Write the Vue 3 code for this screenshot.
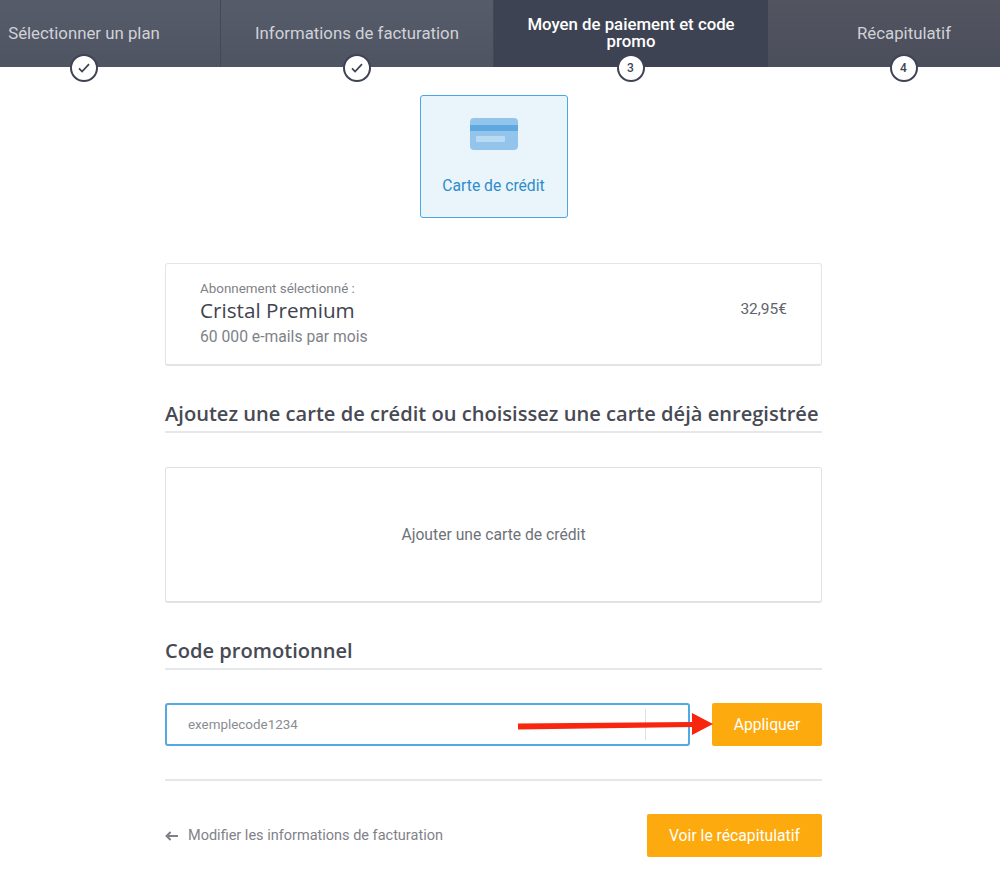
<script setup>
const steps = [
  { label: 'Sélectionner un plan', done: true },
  { label: 'Informations de facturation', done: true },
  { label: 'Moyen de paiement et code promo', num: 3, active: true },
  { label: 'Récapitulatif', num: 4, last: true },
]
</script>

<template>
  <div class="page">
    <header class="stepper">
      <div class="track">
        <div
          v-for="s in steps"
          :key="s.label"
          class="step"
          :class="{ active: s.active, last: s.last }"
        >
          <span class="step-label">{{ s.label }}</span>
          <span class="badge">
            <svg v-if="s.done" width="12" height="10" viewBox="0 0 12 10">
              <path d="M1 5.4 L4.1 8.6 L11 1.2" fill="none" stroke="#3d4252" stroke-width="1.7" />
            </svg>
            <template v-else>{{ s.num }}</template>
          </span>
        </div>
      </div>
    </header>

    <main class="content">
      <div class="method-wrap">
        <div class="method">
          <svg class="card-icon" width="48" height="32" viewBox="0 0 48 32">
            <rect width="48" height="32" rx="4" fill="#93c5ec" />
            <rect y="7" width="48" height="6" fill="#5eaae0" />
            <rect x="6" y="18" width="29" height="6" rx="1" fill="#b9daf3" />
          </svg>
          <span class="method-label">Carte de crédit</span>
        </div>
      </div>

      <section class="summary">
        <div>
          <div class="sum-small">Abonnement sélectionné :</div>
          <div class="sum-name">Cristal Premium</div>
          <div class="sum-detail">60 000 e-mails par mois</div>
        </div>
        <div class="price">32,95€</div>
      </section>

      <h2 class="title first">Ajoutez une carte de crédit ou choisissez une carte déjà enregistrée</h2>

      <div class="add-card">Ajouter une carte de crédit</div>

      <h2 class="title second">Code promotionnel</h2>

      <div class="promo">
        <div class="input">
          <span class="placeholder">exemplecode1234</span>
          <span class="input-sep"></span>
        </div>
        <button class="btn apply">Appliquer</button>
        <svg class="arrow" width="200" height="30" viewBox="0 0 200 30">
          <path d="M0 10.5 L174 9 L174 0 L195 11 L174 22 L174 14 L0 16.5 Z" fill="#f8250f" />
        </svg>
      </div>

      <div class="divider"></div>

      <footer class="footer">
        <a class="back">
          <svg width="14" height="10" viewBox="0 0 14 10">
            <path d="M13 5 H2 M5.6 1 L1.6 5 L5.6 9" fill="none" stroke="#7d8087" stroke-width="2" />
          </svg>
          <span>Modifier les informations de facturation</span>
        </a>
        <button class="btn next">Voir le récapitulatif</button>
      </footer>
    </main>
  </div>
</template>

<style scoped>
.page {
  width: 1000px;
  height: 880px;
  overflow: hidden;
  background: #fff;
  font-family: Roboto, "Liberation Sans", sans-serif;
}
.stepper {
  height: 67px;
  background: #525766;
  box-shadow: inset 0 -1px 0 #474b5a;
}
.track {
  display: flex;
  width: 1092px;
  height: 67px;
  margin-left: -52px;
}
.step {
  position: relative;
  flex: 0 0 273px;
  height: 67px;
  box-sizing: border-box;
  display: flex;
  align-items: center;
  justify-content: center;
  padding: 0 20px;
  background: linear-gradient(#575c6b, #4f5463);
  border-right: 1px solid #434757;
  color: #d0d2d7;
  font-size: 16.8px;
  line-height: 17px;
  text-align: center;
}
.step.active {
  flex-basis: 274px;
  background: #3e4353;
  border-right: 0;
  color: #fff;
  font-weight: 500;
}
.step.last {
  flex-basis: 272px;
  border-right: 0;
  background: linear-gradient(#525560, #4b4e5b);
}
.step-label {
  display: block;
  margin-top: -1px;
}
.badge {
  position: absolute;
  left: 50%;
  top: 54px;
  width: 28px;
  height: 28px;
  box-sizing: border-box;
  margin-left: -14.5px;
  border-radius: 50%;
  border: 2px solid #3f4454;
  background: #fff;
  display: flex;
  align-items: center;
  justify-content: center;
  color: #3d4252;
  font-size: 12px;
  font-weight: 500;
  z-index: 2;
}
.content {
  width: 657px;
  margin-left: 165px;
}
.method-wrap {
  display: flex;
  justify-content: center;
  padding-top: 28px;
}
.method {
  width: 148px;
  height: 123px;
  box-sizing: border-box;
  border: 1px solid #4aa6e6;
  border-radius: 3px;
  background: #e9f4fb;
  display: flex;
  flex-direction: column;
  align-items: center;
}
.card-icon {
  margin-top: 22px;
}
.method-label {
  margin-top: 26px;
  color: #2f8cca;
  font-size: 15.7px;
  line-height: 20px;
}
.summary {
  margin-top: 45px;
  height: 103px;
  box-sizing: border-box;
  border: 1px solid #e3e4e8;
  border-bottom-width: 2px;
  border-radius: 3px;
  padding: 16px 34px;
  display: flex;
  justify-content: space-between;
}
.sum-small {
  color: #7f8288;
  font-size: 13.4px;
  line-height: 18px;
}
.sum-name {
  margin-top: -1px;
  color: #3f4350;
  font-family: "Open Sans", sans-serif;
  font-weight: 500;
  font-size: 20.7px;
  line-height: 27px;
}
.sum-detail {
  margin-top: 3px;
  color: #7f8288;
  font-size: 15.7px;
  line-height: 20px;
}
.price {
  margin-top: 19px;
  color: #5f636c;
  font-size: 15.5px;
  line-height: 20px;
}
.title {
  margin: 0;
  color: #474a54;
  font-family: "Open Sans", sans-serif;
  font-weight: 600;
  font-size: 20.1px;
  line-height: 26px;
  white-space: nowrap;
  border-bottom: 2px solid #e6e7ea;
  box-sizing: border-box;
}
.title.first,
.title.second {
  margin-top: 35px;
  height: 32px;
}
.add-card {
  margin-top: 34px;
  height: 136px;
  box-sizing: border-box;
  border: 1px solid #e1e2e6;
  border-bottom-width: 2px;
  border-radius: 3px;
  display: flex;
  align-items: center;
  justify-content: center;
  color: #6e7279;
  font-size: 15.7px;
}
.promo {
  position: relative;
  margin-top: 33px;
  display: flex;
  justify-content: space-between;
  height: 43px;
}
.input {
  position: relative;
  width: 525px;
  box-sizing: border-box;
  border: 2px solid #53a9e4;
  border-radius: 3px;
  display: flex;
  align-items: center;
  padding-left: 21px;
}
.placeholder {
  color: #8a8d93;
  font-size: 13.4px;
}
.input-sep {
  position: absolute;
  left: 478px;
  top: 4px;
  bottom: 4px;
  width: 1px;
  background: #dfe0e3;
}
.btn {
  border: 0;
  border-radius: 2px;
  background: #fdaa0e;
  color: #fff;
  font-family: inherit;
  font-size: 15.7px;
  padding: 0;
}
.apply {
  width: 110px;
  height: 43px;
}
.arrow {
  position: absolute;
  left: 353px;
  top: 10px;
}
.divider {
  margin-top: 33px;
  height: 2px;
  background: #e6e7ea;
}
.footer {
  margin-top: 33px;
  display: flex;
  align-items: center;
  justify-content: space-between;
  height: 43px;
}
.back {
  display: flex;
  align-items: center;
  gap: 9px;
  color: #7f8288;
  font-size: 14.5px;
}
.next {
  width: 175px;
  height: 43px;
}
</style>

<style>
html, body {
  margin: 0;
  background: #fff;
}
</style>
